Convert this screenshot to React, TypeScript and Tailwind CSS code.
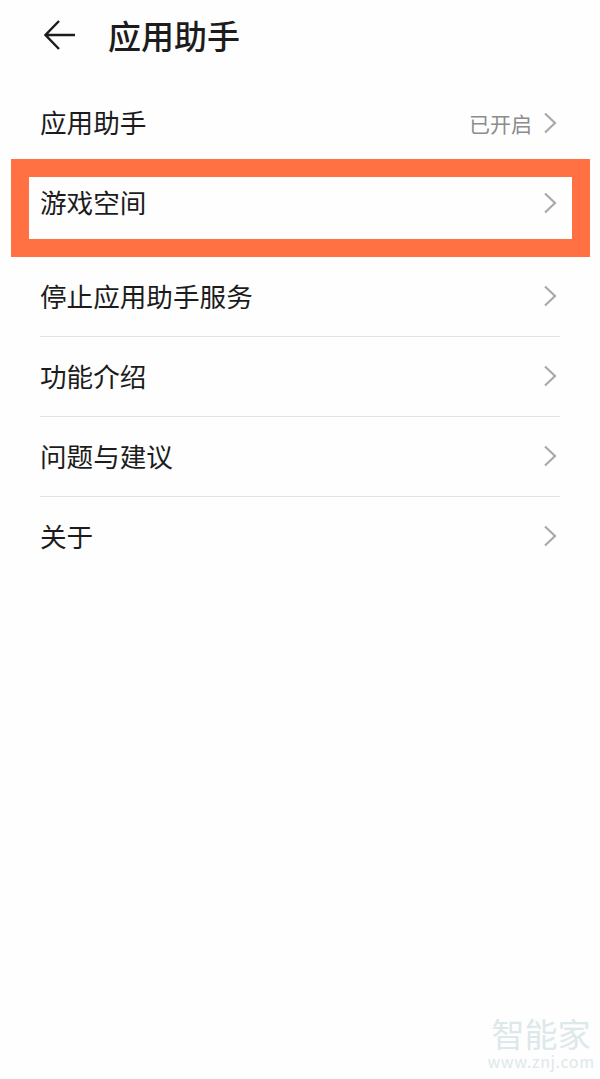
import React from "react";

const FONT = '"Noto Sans CJK SC", "Noto Sans", sans-serif';

function Chevron() {
  return (
    <svg width="14" height="22" viewBox="0 0 14 22" fill="none" className="shrink-0">
      <path d="M2 1.5 L12 11 L2 20.5" stroke="#a9a9a9" strokeWidth="2.2" />
    </svg>
  );
}

function Row({ label, value, border }: { label: string; value?: string; border?: string }) {
  return (
    <div className={`flex h-20 items-center justify-between pr-[3px] ${border ?? ""}`}>
      <span className="-mt-px text-[26.6px] leading-none text-[#1c1c1c]">{label}</span>
      <div className={`flex items-center gap-[11px] ${border ? "-mt-px" : ""}`}>
        {value && <span className="text-[21px] leading-none text-[#8c8c8c]">{value}</span>}
        <Chevron />
      </div>
    </div>
  );
}

export default function App() {
  return (
    <div className="relative h-[1079px] w-[600px] overflow-hidden bg-[#fefefe]" style={{ fontFamily: FONT }}>
      {/* header */}
      <div className="flex h-[83px] items-center pb-[13px] pl-[44px]">
        <svg width="32" height="30" viewBox="0 0 32 30" fill="none" className="shrink-0">
          <path d="M15 1 L1.5 15 L15 29 M1.5 15 H31" stroke="#1c1c1c" strokeWidth="2.4" />
        </svg>
        <span className="ml-[32px] text-[33px] font-medium leading-none text-[#1c1c1c]">应用助手</span>
      </div>

      <div className="px-10">
        <Row label="应用助手" value="已开启" />
        <Row label="游戏空间" />
        <div className="mt-[14px]">
          <Row label="停止应用助手服务" border="border-b border-[#e2e2e2]" />
          <Row label="功能介绍" border="border-b border-[#e2e2e2]" />
          <Row label="问题与建议" border="border-b border-[#e2e2e2]" />
          <Row label="关于" border="border-b border-transparent" />
        </div>
      </div>

      {/* highlight box drawn over the screenshot */}
      <div className="absolute left-[11px] top-[159px] h-[98px] w-[579px] border-[18px] border-[#ff7043]" />

      {/* watermark */}
      <div className="absolute left-[491px] top-[1014px] flex w-[100px] flex-col items-center text-[#dde8ea]">
        <span className="text-[33px] leading-[38px] whitespace-nowrap">智能家</span>
        <span className="text-[16px] leading-[18px] tracking-[0.6px] whitespace-nowrap">www.znj.com</span>
      </div>
    </div>
  );
}
